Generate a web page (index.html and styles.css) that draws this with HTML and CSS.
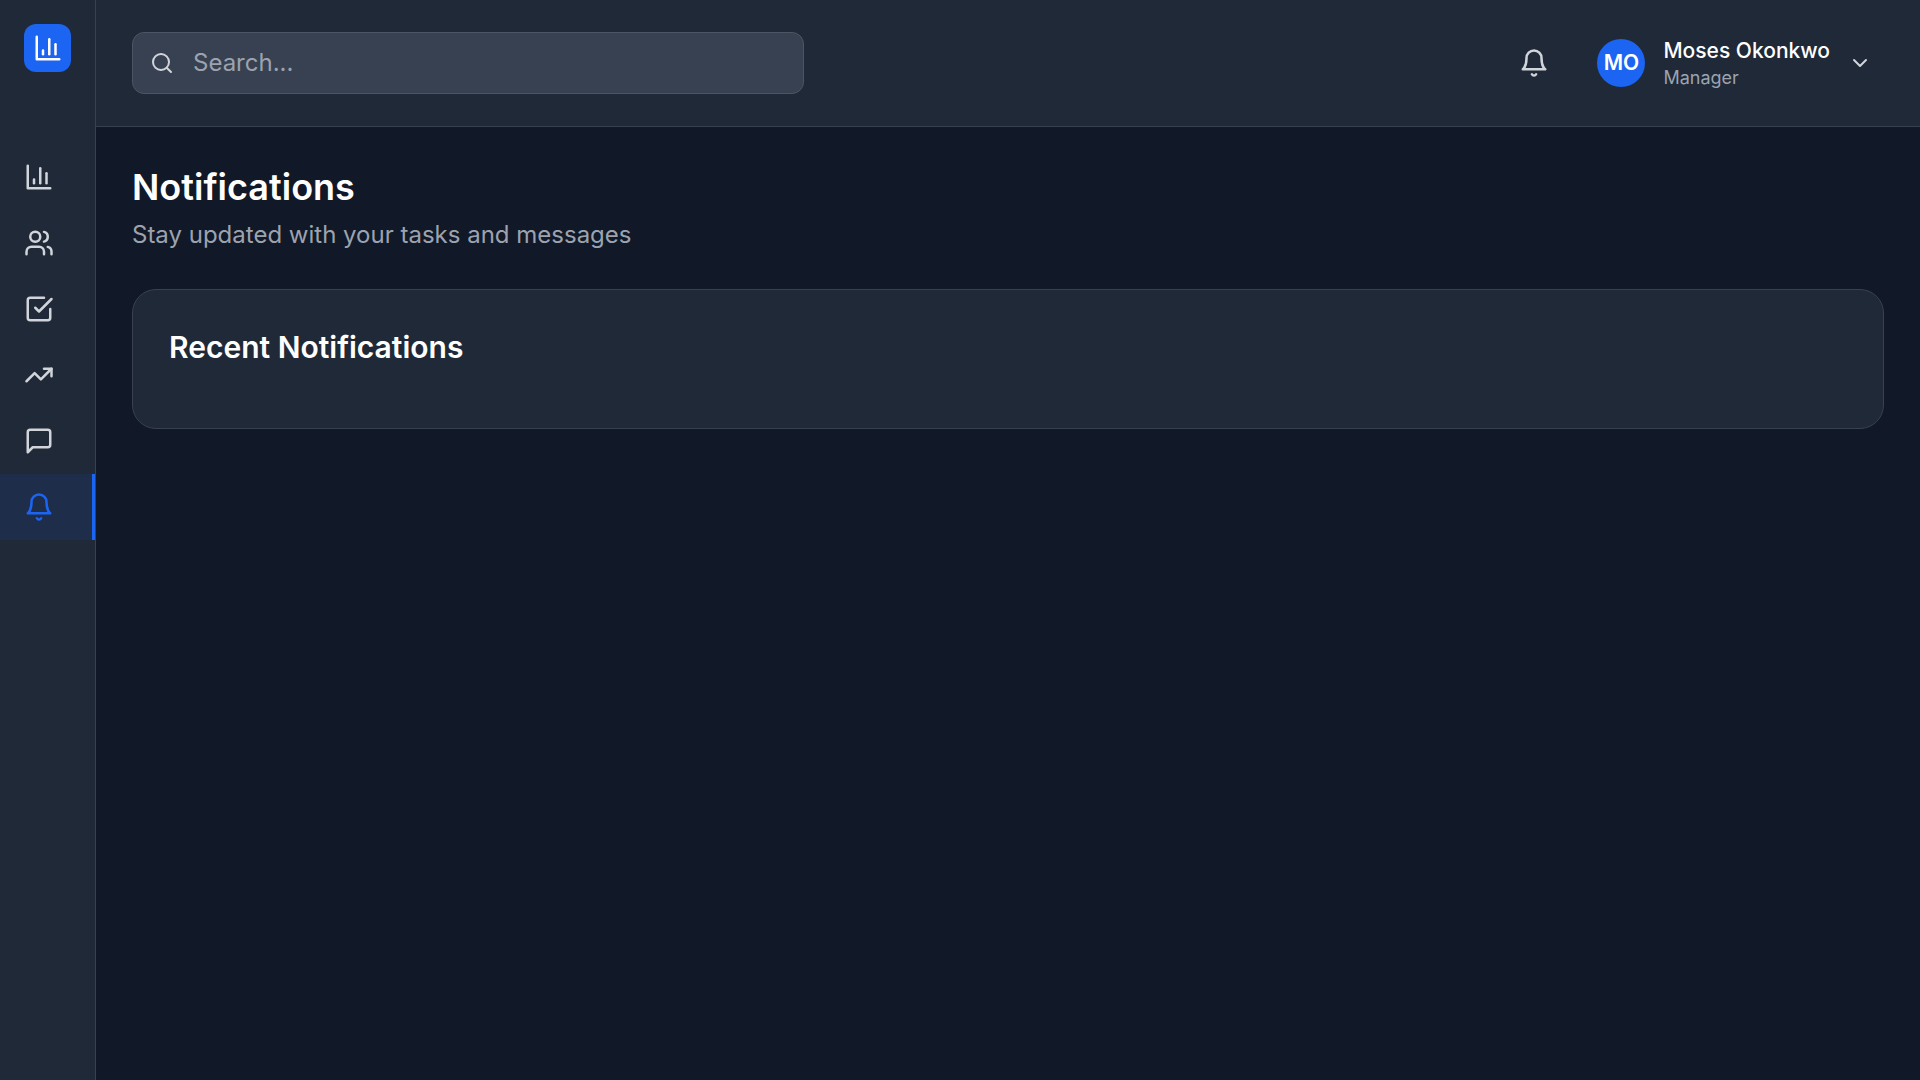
FILE: index.html
```html
<!DOCTYPE html>
<html lang="en">
<head>
  <meta charset="UTF-8">
  <meta name="viewport" content="width=device-width, initial-scale=1.0">
  <title>Notifications</title>
  <link rel="stylesheet" href="styles.css">
</head>
<body>
  <aside class="sidebar">
    <div class="logo">
      <svg class="icon" viewBox="0 0 24 24"><path d="M3 3v18h18"/><path d="M18 17V9"/><path d="M13 17V5"/><path d="M8 17v-3"/></svg>
    </div>
    <nav class="nav">
      <a href="#" class="nav-item" aria-label="Dashboard">
        <svg class="icon" viewBox="0 0 24 24"><path d="M3 3v18h18"/><path d="M18 17V9"/><path d="M13 17V5"/><path d="M8 17v-3"/></svg>
      </a>
      <a href="#" class="nav-item" aria-label="Team">
        <svg class="icon" viewBox="0 0 24 24"><path d="M16 21v-2a4 4 0 0 0-4-4H6a4 4 0 0 0-4 4v2"/><circle cx="9" cy="7" r="4"/><path d="M22 21v-2a4 4 0 0 0-3-3.87"/><path d="M16 3.13a4 4 0 0 1 0 7.75"/></svg>
      </a>
      <a href="#" class="nav-item" aria-label="Tasks">
        <svg class="icon" viewBox="0 0 24 24"><path d="m9 11 3 3L22 4"/><path d="M21 12v7a2 2 0 0 1-2 2H5a2 2 0 0 1-2-2V5a2 2 0 0 1 2-2h11"/></svg>
      </a>
      <a href="#" class="nav-item" aria-label="Performance">
        <svg class="icon" viewBox="0 0 24 24"><polyline points="22 7 13.5 15.5 8.5 10.5 2 17"/><polyline points="16 7 22 7 22 13"/></svg>
      </a>
      <a href="#" class="nav-item" aria-label="Messages">
        <svg class="icon" viewBox="0 0 24 24"><path d="M21 15a2 2 0 0 1-2 2H7l-4 4V5a2 2 0 0 1 2-2h14a2 2 0 0 1 2 2z"/></svg>
      </a>
      <a href="#" class="nav-item active" aria-label="Notifications">
        <svg class="icon" viewBox="0 0 24 24"><path d="M6 8a6 6 0 0 1 12 0c0 7 3 9 3 9H3s3-2 3-9"/><path d="M10.3 21a1.94 1.94 0 0 0 3.4 0"/></svg>
      </a>
    </nav>
  </aside>

  <div class="content">
    <header class="topbar">
      <label class="search">
        <svg class="icon icon-sm" viewBox="0 0 24 24"><circle cx="11" cy="11" r="8"/><path d="m21 21-4.3-4.3"/></svg>
        <input type="text" class="search-input" placeholder="Search...">
      </label>
      <div class="actions">
        <button class="bell-btn" aria-label="Notifications">
          <svg class="icon" viewBox="0 0 24 24"><path d="M6 8a6 6 0 0 1 12 0c0 7 3 9 3 9H3s3-2 3-9"/><path d="M10.3 21a1.94 1.94 0 0 0 3.4 0"/></svg>
        </button>
        <button class="user-btn">
          <span class="avatar">MO</span>
          <span class="user-info">
            <span class="user-name">Moses Okonkwo</span>
            <span class="user-role">Manager</span>
          </span>
          <svg class="icon icon-sm" viewBox="0 0 24 24"><path d="m6 9 6 6 6-6"/></svg>
        </button>
      </div>
    </header>

    <main class="main">
      <h1 class="title">Notifications</h1>
      <p class="subtitle">Stay updated with your tasks and messages</p>
      <section class="card">
        <h2 class="card-title">Recent Notifications</h2>
      </section>
    </main>
  </div>
</body>
</html>
```
FILE: styles.css
```css
* {
  box-sizing: border-box;
}
body {
  margin: 0;
  display: flex;
  min-height: 100vh;
  background-color: #111827;
  color: white;
  font-family: Inter, sans-serif;
  font-size: 24px;
  line-height: 36px;
}
h1, h2, p {
  margin: 0;
}
button {
  background: none;
  border: none;
  color: inherit;
  font-family: inherit;
  cursor: pointer;
}

.icon {
  width: 30px;
  height: 30px;
  flex-shrink: 0;
  fill: none;
  stroke: currentColor;
  stroke-width: 2;
  stroke-linecap: round;
  stroke-linejoin: round;
}
.icon-sm {
  width: 24px;
  height: 24px;
}

/* Sidebar */
.sidebar {
  width: 96px;
  flex-shrink: 0;
  background-color: #1f2937;
  border-right: 1px solid #374151;
}
.logo {
  display: flex;
  align-items: center;
  justify-content: center;
  height: 48px;
  margin: 24px;
  border-radius: 12px;
  background-color: #1c64f2;
}
.nav {
  margin-top: 72px;
}
.nav-item {
  display: flex;
  padding: 18px 24px;
  color: #d1d5db;
}
.nav-item.active {
  background-color: rgba(28, 100, 242, 0.1);
  border-right: 3px solid #1c64f2;
  color: #1c64f2;
}

/* Top bar */
.content {
  flex: 1;
}
.topbar {
  display: flex;
  align-items: center;
  justify-content: space-between;
  padding: 32px 36px;
  height: 127px;
  background-color: #1f2937;
  border-bottom: 1px solid #374151;
}
.search {
  display: flex;
  align-items: center;
  gap: 19px;
  width: 672px;
  height: 62px;
  padding: 0 17px;
  background-color: #374151;
  border: 1px solid #4b5563;
  border-radius: 12px;
  color: #d1d5db;
}
.search-input {
  flex: 1;
  padding: 0;
  background: none;
  border: none;
  outline: none;
  color: white;
  font: inherit;
}
.search-input::placeholder {
  color: #9ca3af;
}
.actions {
  display: flex;
  align-items: center;
  gap: 24px;
  color: #d1d5db;
}
.bell-btn {
  display: flex;
  padding: 12px;
}
.user-btn {
  display: flex;
  align-items: center;
  gap: 18px;
  padding: 0 12px;
}
.avatar {
  display: flex;
  align-items: center;
  justify-content: center;
  width: 48px;
  height: 48px;
  border-radius: 50%;
  background-color: #1c64f2;
  color: white;
  font-size: 21px;
  font-weight: 600;
  line-height: 30px;
  padding-bottom: 1px;
}
.user-info {
  display: flex;
  flex-direction: column;
  text-align: left;
}
.user-name {
  color: white;
  font-size: 21px;
  font-weight: 500;
  line-height: 30px;
}
.user-role {
  color: #9ca3af;
  font-size: 18px;
  line-height: 24px;
}

/* Page */
.main {
  padding: 36px;
}
.title {
  font-size: 36px;
  font-weight: 600;
  line-height: 48px;
}
.subtitle {
  margin-top: 6px;
  color: #9ca3af;
}
.card {
  margin-top: 36px;
  padding: 36px;
  background-color: #1f2937;
  border: 1px solid #374151;
  border-radius: 24px;
}
.card-title {
  margin-bottom: 24px;
  font-size: 30px;
  font-weight: 600;
  line-height: 42px;
}
```
